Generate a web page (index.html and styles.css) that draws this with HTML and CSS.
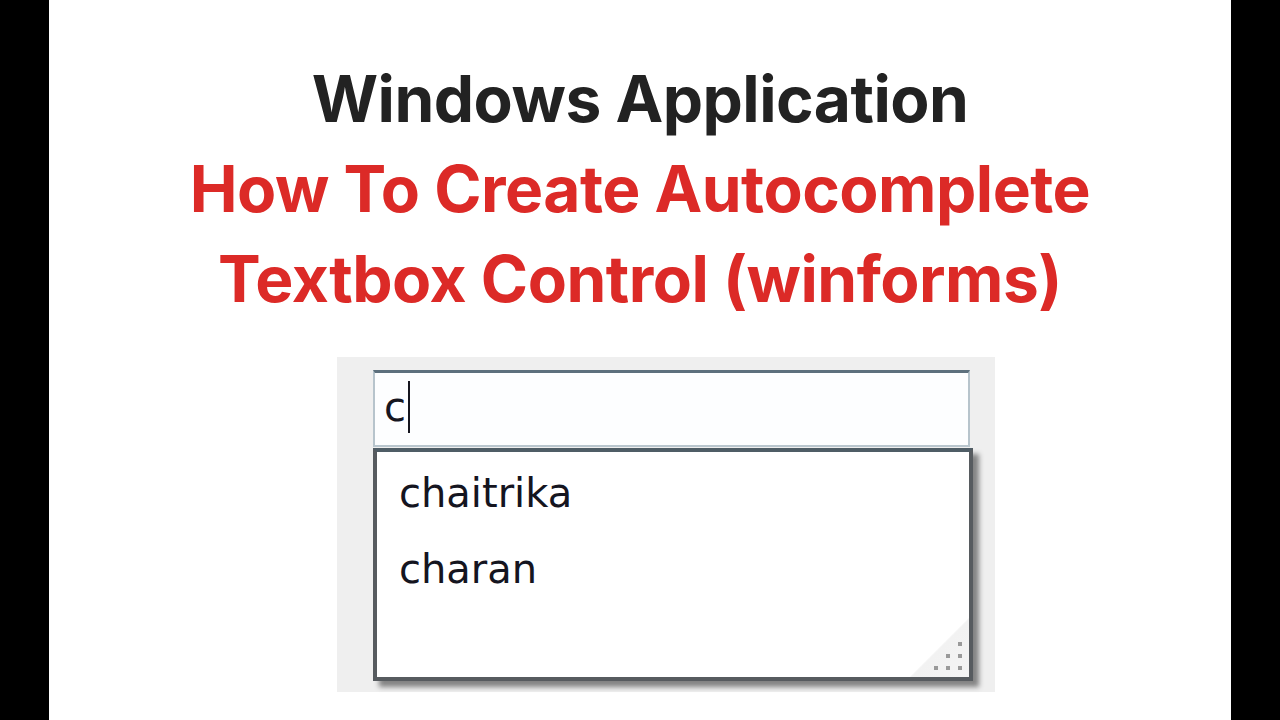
FILE: index.html
```html
<!DOCTYPE html>
<html>
<head>
<meta charset="utf-8">
<link rel="stylesheet" href="styles.css">
</head>
<body>
<div class="frame">
  <div class="bar"></div>
  <main class="slide">
    <h1 class="title">
      <span class="line dark">Windows Application</span>
      <span class="line red">How To Create Autocomplete</span>
      <span class="line red">Textbox Control (winforms)</span>
    </h1>
    <div class="shot">
      <div class="textbox"><span class="typed">c</span><span class="caret"></span></div>
      <div class="dropdown">
        <div class="item">chaitrika</div>
        <div class="item">charan</div>
        <div class="grip">
          <span class="dot d1"></span>
          <span class="dot d2"></span><span class="dot d3"></span>
          <span class="dot d4"></span><span class="dot d5"></span><span class="dot d6"></span>
        </div>
      </div>
    </div>
  </main>
  <div class="bar"></div>
</div>
</body>
</html>
```

FILE: styles.css
```css
html, body {
  margin: 0;
  padding: 0;
  background: #000;
}
.frame {
  display: flex;
  width: 1280px;
  height: 720px;
}
.bar {
  width: 49px;
  background: #000;
  flex: none;
}
.slide {
  width: 1182px;
  flex: none;
  background: #fff;
  display: flex;
  flex-direction: column;
}
.title {
  margin: 0;
  padding-top: 54px;
  font-family: Inter, "Liberation Sans", sans-serif;
  font-weight: 700;
  font-size: 64px;
  line-height: 90px;
  text-align: center;
  display: flex;
  flex-direction: column;
  align-items: center;
}
.line {
  display: block;
  letter-spacing: -0.5px;
}
.dark { color: #222222; }
.red { color: #dc2a27; }

.shot {
  margin-top: 33px;
  margin-left: 288px;
  width: 658px;
  height: 335px;
  background: #efefef;
  box-sizing: border-box;
  padding: 13px 0 0 36px;
  display: flex;
  flex-direction: column;
}
.textbox {
  width: 597px;
  height: 77px;
  box-sizing: border-box;
  border-top: 3px solid #5d707d;
  border-left: 2px solid #b7c4cc;
  border-right: 2px solid #b7c4cc;
  border-bottom: 2px solid #b9c6ce;
  background: #fdfeff;
  display: flex;
  align-items: flex-start;
  padding: 8px 0 0 9px;
  font-family: "DejaVu Sans", sans-serif;
  font-size: 40px;
  line-height: 52px;
  color: #16161f;
}
.caret {
  width: 2px;
  height: 52px;
  background: #16161f;
  margin-left: 2px;
}
.dropdown {
  position: relative;
  margin-top: 1px;
  width: 600px;
  height: 233px;
  box-sizing: border-box;
  border: 4px solid #575b5f;
  border-top-color: #4f5d66;
  background: #ffffff;
  box-shadow: 6px 6px 5px rgba(0, 0, 0, 0.45);
  padding: 3px 0 0 22px;
  font-family: "DejaVu Sans", sans-serif;
  font-size: 40px;
  line-height: 76px;
  color: #15151f;
}
.grip {
  position: absolute;
  right: 0;
  bottom: 0;
  width: 60px;
  height: 60px;
  background: linear-gradient(135deg, rgba(255,255,255,0) 50%, #f2f2f2 52%, #f4f4f4 100%);
}
.dot {
  position: absolute;
  width: 4px;
  height: 4px;
  background: #9a9a9a;
}
.d1 { right: 7px; bottom: 31px; }
.d2 { right: 19px; bottom: 19px; }
.d3 { right: 7px; bottom: 19px; }
.d4 { right: 31px; bottom: 7px; }
.d5 { right: 19px; bottom: 7px; }
.d6 { right: 7px; bottom: 7px; }
```
